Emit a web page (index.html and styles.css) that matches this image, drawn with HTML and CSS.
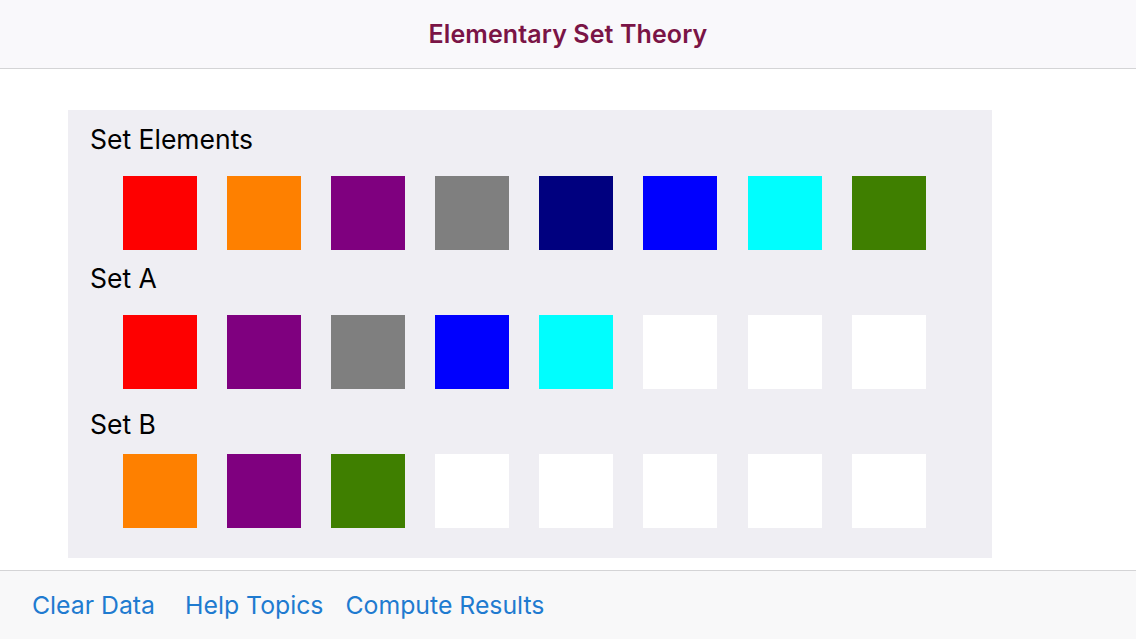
FILE: index.html
```html
<!DOCTYPE html>
<html>
<head>
<meta charset="utf-8">
<link rel="stylesheet" href="styles.css">
</head>
<body>
<header class="navbar"><h1 class="title">Elementary Set Theory</h1></header>
<main class="content">
  <section class="panel">
    <div class="label first">Set Elements</div>
    <div class="row r1">
      <div class="sq red"></div><div class="sq orange"></div><div class="sq purple"></div><div class="sq gray"></div>
      <div class="sq navy"></div><div class="sq blue"></div><div class="sq cyan"></div><div class="sq green"></div>
    </div>
    <div class="label second">Set A</div>
    <div class="row r2">
      <div class="sq red"></div><div class="sq purple"></div><div class="sq gray"></div><div class="sq blue"></div>
      <div class="sq cyan"></div><div class="sq empty"></div><div class="sq empty"></div><div class="sq empty"></div>
    </div>
    <div class="label third">Set B</div>
    <div class="row r3">
      <div class="sq orange"></div><div class="sq purple"></div><div class="sq green"></div><div class="sq empty"></div>
      <div class="sq empty"></div><div class="sq empty"></div><div class="sq empty"></div><div class="sq empty"></div>
    </div>
  </section>
</main>
<footer class="toolbar">
  <a class="link clear">Clear Data</a>
  <a class="link help">Help Topics</a>
  <a class="link compute">Compute Results</a>
</footer>
</body>
</html>
```

FILE: styles.css
```css
* { box-sizing: border-box; }
html, body { margin: 0; padding: 0; }
body {
  width: 1136px;
  height: 639px;
  overflow: hidden;
  background: #ffffff;
  font-family: Inter, "Liberation Sans", sans-serif;
  display: flex;
  flex-direction: column;
}
.navbar {
  height: 69px;
  background: #f9f8fb;
  border-bottom: 1px solid #d4d4d6;
  display: flex;
  align-items: center;
  justify-content: center;
  flex-shrink: 0;
}
.title {
  margin: 0;
  font-size: 25px;
  font-weight: 600;
  color: #7a1446;
  letter-spacing: 0.1px;
  padding-bottom: 1px;
}
.content {
  flex: 1;
  padding: 41px 0 0 68px;
}
.panel {
  width: 924px;
  height: 448px;
  background: #efeef3;
  padding: 14px 0 0 22px;
}
.label {
  font-size: 26.5px;
  line-height: 30px;
  color: #000;
}
.row {
  display: flex;
  gap: 30.1px;
  padding-left: 33px;
}
.r1 { margin-top: 22px; }
.second { margin-top: 13px; }
.r2 { margin-top: 22px; }
.third { margin-top: 20px; }
.r3 { margin-top: 15px; }
.sq { width: 74px; height: 74px; }
.red { background: #fe0000; }
.orange { background: #fe8000; }
.purple { background: #7f007f; }
.gray { background: #7f7f7f; }
.navy { background: #00007f; }
.blue { background: #0000fe; }
.cyan { background: #00fefe; }
.green { background: #3f7f00; }
.empty { background: #ffffff; }
.toolbar {
  height: 69px;
  flex-shrink: 0;
  background: #f8f8f9;
  border-top: 1px solid #d4d4d6;
  display: flex;
  align-items: center;
  padding: 0 0 0 32px;
}
.link {
  font-size: 24.8px;
  color: #1f7bd0;
  cursor: pointer;
}
.help { margin-left: 30px; }
.compute { margin-left: 22px; }
```
